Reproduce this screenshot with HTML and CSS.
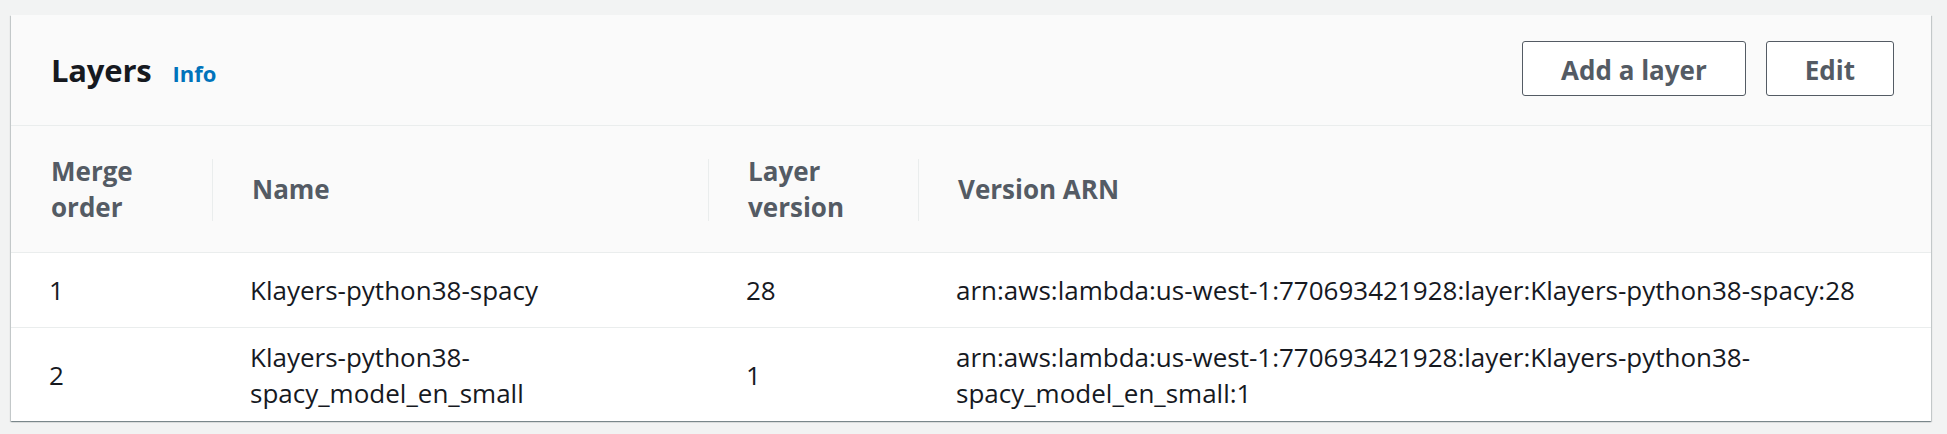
FILE: index.html
```html
<!DOCTYPE html>
<html lang="en">
<head>
<meta charset="utf-8">
<title>Layers</title>
<link rel="stylesheet" href="styles.css">
</head>
<body>
<section class="card">
  <header class="card-header">
    <div class="title">
      <h2>Layers</h2>
      <a class="info" href="#">Info</a>
    </div>
    <div class="actions">
      <button class="btn" type="button">Add a layer</button>
      <button class="btn" type="button">Edit</button>
    </div>
  </header>
  <table class="layers">
    <colgroup>
      <col class="c-order">
      <col class="c-name">
      <col class="c-version">
      <col class="c-arn">
    </colgroup>
    <thead>
      <tr>
        <th>Merge order</th>
        <th class="sep">Name</th>
        <th class="sep">Layer version</th>
        <th class="sep">Version ARN</th>
      </tr>
    </thead>
    <tbody>
      <tr class="row-first">
        <td>1</td>
        <td>Klayers-python38-spacy</td>
        <td>28</td>
        <td>arn:aws:lambda:us-west-1:770693421928:layer:Klayers-python38-spacy:28</td>
      </tr>
      <tr class="row-second">
        <td>2</td>
        <td>Klayers-python38-spacy_model_en_small</td>
        <td>1</td>
        <td>arn:aws:lambda:us-west-1:770693421928:layer:Klayers-python38-spacy_model_en_small:1</td>
      </tr>
    </tbody>
  </table>
</section>
</body>
</html>
```
FILE: styles.css
```css
html, body {
  margin: 0;
  padding: 0;
}
body {
  background: #f2f3f3;
  padding: 15px 16px 0 11px;
  font-family: "Open Sans", "Noto Sans", Arial, sans-serif;
  color: #16191f;
  height: 434px;
  box-sizing: border-box;
  overflow: hidden;
}
.card {
  background: #ffffff;
  height: 406px;
  overflow: hidden;
  box-shadow: 0 1px 1px 0 rgba(0, 28, 36, 0.3),
              1px 1px 1px 0 rgba(0, 28, 36, 0.15),
              -1px 1px 1px 0 rgba(0, 28, 36, 0.15);
}
.card-header {
  height: 110px;
  background: #fafafa;
  border-bottom: 1px solid #eaeded;
  display: flex;
  align-items: center;
  justify-content: space-between;
  padding: 0 37px 0 40px;
}
.title {
  display: flex;
  align-items: baseline;
  gap: 21px;
}
.title h2 {
  margin: 0;
  font-size: 31px;
  line-height: 36px;
  font-weight: 700;
  color: #16191f;
  letter-spacing: -0.2px;
}
.info {
  font-size: 22px;
  font-weight: 700;
  color: #0073bb;
  text-decoration: none;
}
.actions {
  display: flex;
  gap: 20px;
  margin-bottom: 3px;
}
.btn {
  box-sizing: border-box;
  height: 55px;
  padding: 3px 38px 0;
  background: #ffffff;
  border: 1px solid #545b64;
  border-radius: 3px;
  font-family: inherit;
  font-size: 26px;
  font-weight: 700;
  color: #545b64;
  line-height: 1;
}
.layers {
  width: 100%;
  table-layout: fixed;
  border-collapse: separate;
  border-spacing: 0;
  font-size: 26px;
  line-height: 36px;
}
.c-order { width: 201px; }
.c-name { width: 496px; }
.c-version { width: 210px; }
.layers th {
  box-sizing: border-box;
  height: 127px;
  background: #fafafa;
  border-bottom: 1px solid #eaeded;
  padding: 0 20px 0 40px;
  text-align: left;
  vertical-align: middle;
  font-weight: 700;
  color: #545b64;
  position: relative;
}
.layers th.sep::before {
  content: "";
  position: absolute;
  left: 0;
  top: 33px;
  bottom: 31px;
  width: 1px;
  background: #eaeded;
}
.layers td {
  box-sizing: border-box;
  padding: 0 20px 0 38px;
  vertical-align: middle;
  color: #16191f;
  font-weight: 400;
}
.row-first td {
  height: 75px;
  border-bottom: 1px solid #eaeded;
}
.row-second td {
  height: 93px;
}
```
